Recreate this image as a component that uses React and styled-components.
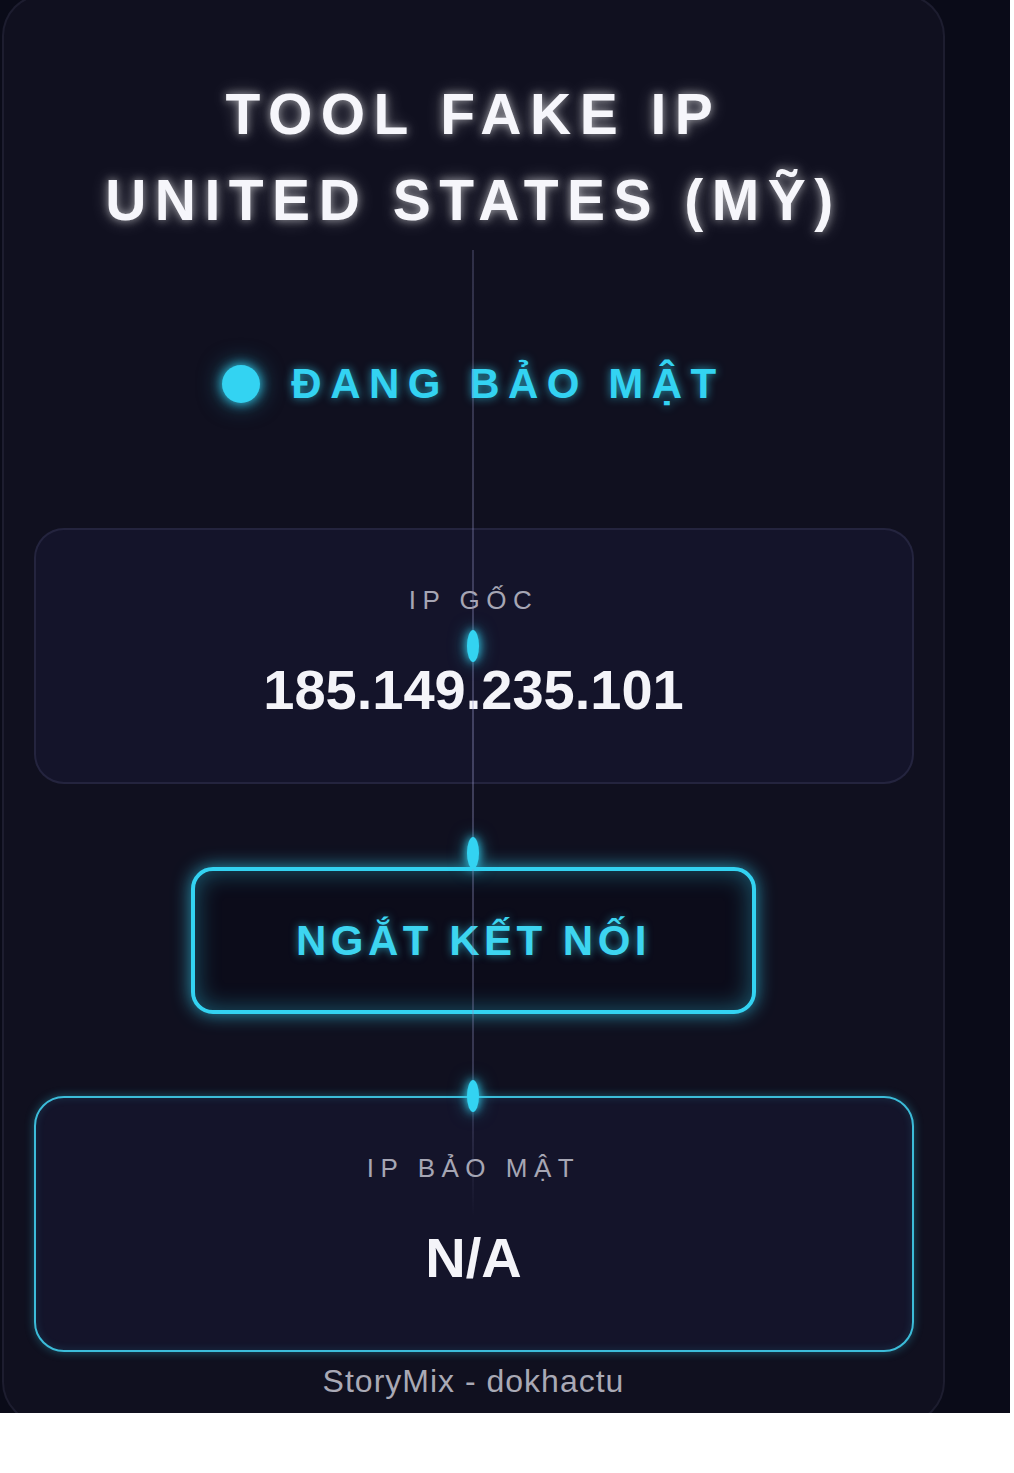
import styled, { createGlobalStyle } from 'styled-components';

const GlobalStyle = createGlobalStyle`
  body {
    margin: 0;
    background: #ffffff;
    font-family: "Liberation Sans", Arial, sans-serif;
  }
`;

const cyan = '#33d3f2';

const Screen = styled.div`
  width: 1010px;
  height: 1413px;
  overflow: hidden;
  background: #0a0b18;
  padding-left: 2px;
  box-sizing: border-box;
`;

const Card = styled.main`
  position: relative;
  width: 943px;
  min-height: 1430px;
  margin-top: -6px;
  box-sizing: border-box;
  border: 2px solid rgba(150, 150, 200, 0.1);
  border-radius: 42px;
  background: #10101f;
  padding-top: 75px;
  display: flex;
  flex-direction: column;
  align-items: center;
`;

// đường dọc trang trí chạy qua giữa card
const Beam = styled.div`
  position: absolute;
  left: 468px;
  top: 254px;
  width: 2px;
  height: 967px;
  z-index: 2;
  background: linear-gradient(
    to bottom,
    rgba(140, 140, 190, 0.25),
    rgba(150, 150, 200, 0.35) 50%,
    rgba(140, 140, 190, 0.3) 85%,
    rgba(140, 140, 190, 0)
  );
`;

const Spark = styled.span`
  position: absolute;
  left: 463px;
  width: 12px;
  height: 32px;
  border-radius: 50%;
  z-index: 3;
  background: ${cyan};
  box-shadow: 0 0 10px ${cyan}, 0 0 18px rgba(51, 211, 242, 0.6);
`;

const Title = styled.h1`
  margin: 0;
  font-size: 57px;
  line-height: 86px;
  font-weight: 700;
  letter-spacing: 8.5px;
  text-align: center;
  color: #f6f6fb;
  text-shadow: 0 0 8px rgba(255, 255, 255, 0.55), 0 0 18px rgba(255, 255, 255, 0.3);
`;

const Status = styled.div`
  margin-top: 117px;
  height: 48px;
  display: flex;
  align-items: center;
  gap: 31px;
  font-size: 42px;
  line-height: 48px;
  font-weight: 700;
  letter-spacing: 8.5px;
  color: ${cyan};
  text-shadow: 0 0 10px rgba(51, 211, 242, 0.7);
`;

const Dot = styled.span`
  width: 38px;
  height: 38px;
  border-radius: 50%;
  background: ${cyan};
  box-shadow: 0 0 12px ${cyan}, 0 0 24px rgba(51, 211, 242, 0.5);
`;

const InfoCard = styled.section`
  width: 880px;
  height: 256px;
  box-sizing: border-box;
  margin-top: ${({ $gap }) => $gap}px;
  padding-top: 55px;
  border-radius: 30px;
  background: #14142a;
  border: 2px solid ${({ $active }) => ($active ? '#3cbcd9' : 'rgba(160, 160, 210, 0.12)')};
  box-shadow: ${({ $active }) =>
    $active ? '0 0 10px rgba(51, 211, 242, 0.35), inset 0 0 8px rgba(51, 211, 242, 0.15)' : 'none'};
  display: flex;
  flex-direction: column;
  align-items: center;
`;

const Label = styled.div`
  font-size: 26px;
  line-height: 30px;
  letter-spacing: 6.5px;
  color: #a6a6b4;
`;

const Value = styled.div`
  margin-top: 43px;
  font-size: 56px;
  line-height: 64px;
  font-weight: 700;
  color: #f4f4f9;
`;

const DisconnectButton = styled.button`
  margin-top: 83px;
  width: 565px;
  height: 147px;
  box-sizing: border-box;
  border: 4px solid ${cyan};
  border-radius: 22px;
  background: #0c0c1a;
  box-shadow: 0 0 18px rgba(51, 211, 242, 0.7), inset 0 0 24px rgba(51, 211, 242, 0.4);
  font-family: "Liberation Sans", Arial, sans-serif;
  font-size: 42px;
  font-weight: 700;
  letter-spacing: 4.5px;
  color: #3dd5f0;
  text-shadow: 0 0 8px rgba(51, 211, 242, 0.6);
  cursor: pointer;
`;

const Footer = styled.div`
  margin-top: 11px;
  font-size: 32px;
  line-height: 36px;
  letter-spacing: 1px;
  color: #a9a9b5;
`;

const App = () => {
  return (
    <>
      <GlobalStyle />
      <Screen>
        <Card>
          <Beam />
          <Spark style={{ top: 634 }} />
          <Spark style={{ top: 841 }} />
          <Spark style={{ top: 1084 }} />

          <Title>
            TOOL FAKE IP
            <br />
            UNITED STATES (MỸ)
          </Title>

          <Status>
            <Dot />
            ĐANG BẢO MẬT
          </Status>

          <InfoCard $gap={120}>
            <Label>IP GỐC</Label>
            <Value>185.149.235.101</Value>
          </InfoCard>

          <DisconnectButton>NGẮT KẾT NỐI</DisconnectButton>

          <InfoCard $gap={82} $active>
            <Label>IP BẢO MẬT</Label>
            <Value>N/A</Value>
          </InfoCard>

          <Footer>StoryMix - dokhactu</Footer>
        </Card>
      </Screen>
    </>
  );
};

export default App;
